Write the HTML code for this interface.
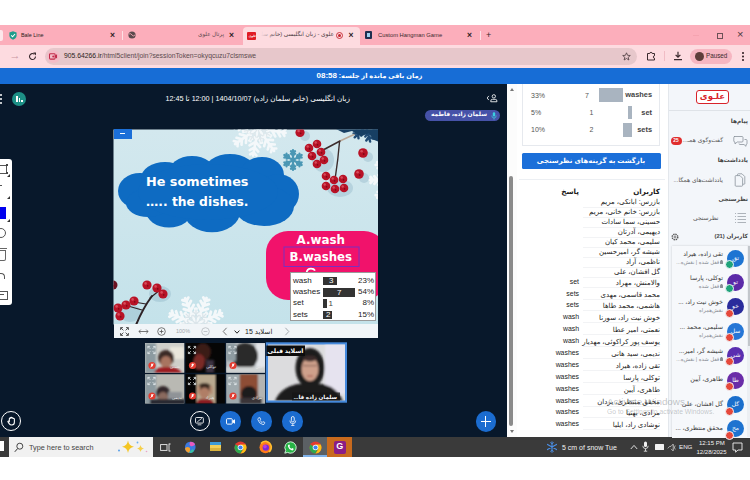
<!DOCTYPE html>
<html lang="fa">
<head>
<meta charset="utf-8">
<title>علوی - زبان انگلیسی</title>
<style>
html,body{margin:0;padding:0;}
body{width:750px;height:480px;overflow:hidden;background:#fff;position:relative;font-family:"Liberation Sans","DejaVu Sans",sans-serif;font-size:8px;color:#222;}
.a{position:absolute;}
.t{position:absolute;white-space:nowrap;line-height:1;}
.rtl{direction:rtl;}
svg{position:absolute;overflow:visible;}
/* chrome */
#tabbar{left:0;top:25px;width:750px;height:21px;background:#fcaebb;}
#toolbar{left:0;top:45px;width:750px;height:23px;background:#fddbe0;}
#acttab{left:243px;top:27px;width:117px;height:19px;background:#fddbe0;border-radius:4px 4px 0 0;}
#url{left:45px;top:48px;width:592px;height:16.5px;border-radius:8.5px;background:#e7c7cb;}
#bluebar{left:0;top:67.5px;width:750px;height:17px;background:#176dd6;}
#navy{left:0;top:84px;width:507px;height:353px;background:#08182b;}
#panel{left:507px;top:84px;width:161px;height:353px;background:#fff;}
#side{left:668px;top:84px;width:82px;height:353px;background:#f3f6fa;}
#taskbar{left:0;top:437px;width:750px;height:19.5px;background:#3a3a3a;}
/* poll table */
.row{position:absolute;right:90px;white-space:nowrap;direction:rtl;font-size:7px;line-height:1;color:#1a1a1a;}
.ans{position:absolute;right:171px;white-space:nowrap;font-size:6.9px;line-height:1;color:#1a1a1a;}
.un{position:absolute;right:27px;white-space:nowrap;direction:rtl;font-size:6.3px;line-height:1;color:#3a3a3a;}
.us{position:absolute;right:27px;white-space:nowrap;direction:rtl;font-size:5.3px;line-height:1;color:#8a8f96;}
.lk{display:inline-block;width:2.6px;height:2.4px;background:#8a8f96;margin-left:1px;border-radius:.5px;box-shadow:0 -1.6px 0 -0.6px #8a8f96;}
.av{position:absolute;left:727px;width:17px;height:17px;border-radius:50%;color:#fff;font-size:6px;line-height:17px;text-align:center;}
.bd{position:absolute;left:725px;width:7px;height:7px;border-radius:50%;background:#e5483b;border:1px solid #f3f6fa;}
</style>
</head>
<body>
<!-- browser chrome -->
<div class="a" id="tabbar"></div>
<div class="a" id="toolbar"></div>
<div class="a" id="acttab"></div>
<div class="a" id="url"></div>
<div class="a" id="bluebar"></div>
<div class="a" id="navy"></div>
<div class="a" id="panel"></div>
<div class="a" id="side"></div>
<div class="a" id="taskbar"></div>

<!-- tabs -->
<div class="a" style="left:0;top:30px;width:3px;height:11px;background:#fde6ea;border-radius:0 2px 2px 0;"></div>
<svg style="left:9px;top:31px" width="8" height="9" viewBox="0 0 8 9"><path d="M4 0.3 L7.6 1.5 V4.6 C7.6 6.8 5.8 8.2 4 8.8 C2.2 8.2 0.4 6.8 0.4 4.6 V1.5 Z" fill="#1f9d8b"/><path d="M2.2 4.4 L3.6 5.8 L6 3" stroke="#fff" stroke-width="1.1" fill="none"/></svg>
<div class="t" style="left:21px;top:32.5px;font-size:5.4px;color:#2a1c20;">Bale Line</div>
<div class="t" style="left:110px;top:31px;font-size:8.5px;font-weight:bold;color:#2e2024;">×</div>
<div class="a" style="left:122px;top:31px;width:1px;height:9px;background:#fde0e5;"></div>
<svg style="left:128px;top:31px" width="8" height="8" viewBox="0 0 8 8"><circle cx="4" cy="4" r="3.6" fill="#5a4a4e"/><path d="M1 3 Q3 2 4 4 T7 4" stroke="#fcaebb" stroke-width="0.8" fill="none"/></svg>
<div class="t rtl" style="right:526px;top:31.5px;font-size:5.6px;color:#5a474b;">پرتال علوی</div>
<div class="t" style="left:229px;top:31px;font-size:8.5px;font-weight:bold;color:#2e2024;">×</div>
<div class="a" style="left:247px;top:32px;width:9px;height:8px;background:#e01b24;border-radius:1px;"></div>
<div class="t" style="left:248.5px;top:34.5px;font-size:3px;color:#fff;font-weight:bold;">علوی</div>
<div class="a" style="left:261px;top:29px;width:73px;height:12px;overflow:hidden;"><div class="t rtl" style="right:0;top:2.5px;font-size:5.8px;color:#4a3a3e;">علوی - زبان انگلیسی (خانم سلمان زاده) 1404/10/07</div><div class="a" style="left:0;top:0;width:16px;height:12px;background:linear-gradient(to right,#fddbe0,rgba(253,219,224,0));"></div></div>
<svg style="left:336px;top:32px" width="7" height="7" viewBox="0 0 7 7"><circle cx="3.5" cy="3.5" r="3" fill="none" stroke="#c4232c" stroke-width="0.9"/><circle cx="3.5" cy="3.5" r="1.5" fill="#c4232c"/></svg>
<div class="t" style="left:348.5px;top:31px;font-size:8.5px;font-weight:bold;color:#2e2024;">×</div>
<div class="a" style="left:365px;top:31px;width:7px;height:8px;background:#1f2f4f;border-radius:1px;"></div>
<div class="a" style="left:367px;top:33px;width:3px;height:4px;background:#9fd0f0;"></div>
<div class="t" style="left:378px;top:32.5px;font-size:5.8px;color:#3b2a2e;">Custom Hangman Game</div>
<div class="t" style="left:467px;top:31px;font-size:8.5px;font-weight:bold;color:#2e2024;">×</div>
<div class="a" style="left:480px;top:31px;width:1px;height:9px;background:#fde0e5;"></div>
<div class="t" style="left:486px;top:30.5px;font-size:9px;color:#3b2a2e;">+</div>
<!-- window controls -->
<div class="a" style="left:693px;top:35px;width:6px;height:1px;background:#f5a3b0;"></div>
<div class="a" style="left:716.5px;top:32.5px;width:4px;height:4px;border:1px solid #6b5156;border-top-width:1.6px;"></div>
<div class="t" style="left:737px;top:29px;font-size:11px;color:#4a3a3e;">×</div>
<!-- toolbar -->
<div class="t" style="left:9.5px;top:50px;font-size:11px;color:#c8959f;">→</div>
<svg style="left:28px;top:52px" width="9" height="9" viewBox="0 0 9 9"><path d="M7.5 4.5 A3 3 0 1 1 6.4 2.2" stroke="#3b2a2e" stroke-width="1.1" fill="none"/><path d="M5.2 0.6 H8 V3.4 Z" fill="#3b2a2e"/></svg>
<div class="a" style="left:47px;top:50px;width:12.5px;height:12.5px;border-radius:50%;background:#f3bcc7;"></div>
<svg style="left:49px;top:53px" width="8.5" height="6.8" viewBox="0 0 10 8"><rect x="0.6" y="0.8" width="6.6" height="6.4" rx="1.2" fill="none" stroke="#c22b4a" stroke-width="1.2"/><path d="M7 3 L9.5 1.5 V6.5 L7 5 Z" fill="#c22b4a"/><circle cx="5" cy="4" r="1.2" fill="#c22b4a"/></svg>
<div class="t" style="left:64px;top:52.5px;font-size:6.8px;color:#5c4a4e;"><span style="color:#2a1d20">905.64266.ir</span>/html5client/join?sessionToken=okyqcuzu7clsmswe</div>
<svg style="left:622px;top:52px" width="9" height="9" viewBox="0 0 9 9"><path d="M4.5 0.8 L5.6 3.3 L8.3 3.5 L6.2 5.3 L6.9 8 L4.5 6.5 L2.1 8 L2.8 5.3 L0.7 3.5 L3.4 3.3 Z" fill="none" stroke="#4a3a3e" stroke-width="0.8"/></svg>
<svg style="left:646px;top:51px" width="10" height="10" viewBox="0 0 10 10"><path d="M1.5 2.5 H3.8 A1.2 1.2 0 1 1 6.2 2.5 H8.5 V4.8 A1.2 1.2 0 1 0 8.5 7.2 V9 H1.5 Z" fill="none" stroke="#3b2a2e" stroke-width="1"/></svg>
<div class="a" style="left:664px;top:51px;width:1px;height:10px;background:#f1bcc5;"></div>
<svg style="left:673px;top:51px" width="10" height="10" viewBox="0 0 10 10"><path d="M5 0.8 V6 M2.6 3.8 L5 6.2 L7.4 3.8 M1 8.6 H9" stroke="#3b2a2e" stroke-width="1.2" fill="none"/></svg>
<div class="a" style="left:690px;top:49px;width:42px;height:15px;border-radius:8px;background:#f6b6c1;"></div>
<div class="a" style="left:694.5px;top:52px;width:9px;height:9px;border-radius:50%;background:#5e3d3a;"></div>
<div class="t" style="left:706px;top:53px;font-size:6.3px;color:#3b2a2e;">Paused</div>
<div class="a" style="left:742px;top:52px;width:1.6px;height:1.6px;border-radius:50%;background:#3b2a2e;box-shadow:0 3.5px 0 #3b2a2e,0 7px 0 #3b2a2e;"></div>
<!-- blue bar -->
<div class="t rtl" style="left:316px;width:107px;text-align:center;top:72px;font-size:6.7px;font-weight:bold;color:#fff;">زمان باقی مانده از جلسه: <span style="font-size:8px">08:58</span></div>

<!-- navy area header -->
<div class="a" style="left:0;top:94px;width:2px;height:2px;border-radius:50%;background:#fff;box-shadow:0 4px 0 #fff,0 8px 0 #fff;"></div>
<div class="a" style="left:12px;top:92px;width:14px;height:14px;border-radius:50%;background:#1d8f86;"></div>
<div class="a" style="left:15.5px;top:96px;width:2px;height:6px;background:#fff;"></div>
<div class="a" style="left:18.5px;top:98px;width:1.5px;height:4px;background:#fff;"></div>
<div class="a" style="left:21px;top:100px;width:1.5px;height:2px;background:#fff;"></div>
<div class="t rtl" id="title" style="right:400px;top:94.5px;font-size:7.2px;color:#fff;">زبان انگلیسی (خانم سلمان زاده) 1404/10/07 | 12:00 تا 12:45</div>
<svg style="left:484.5px;top:93px" width="13.5" height="10" viewBox="0 0 16 12"><path d="M4.5 3.5 L2.5 6 L4.5 8.5" stroke="#fff" stroke-width="1" fill="none"/><circle cx="10.5" cy="4" r="2" fill="none" stroke="#fff" stroke-width="1"/><path d="M6.8 10.5 V9.6 Q6.8 7.6 8.8 7.6 H12.2 Q14.2 7.6 14.2 9.6 V10.5 Z" fill="none" stroke="#fff" stroke-width="1"/></svg>
<div class="a" style="left:425px;top:110px;width:75px;height:11px;border-radius:6px;background:#4652a8;"></div>
<div class="t rtl" style="right:263px;top:112.3px;font-size:5.9px;font-weight:bold;color:#fff;">سلمان زاده، فاطمه</div>
<svg style="left:491px;top:112px" width="6" height="8" viewBox="0 0 6 8"><rect x="1.8" y="0.3" width="2.4" height="4.2" rx="1.2" fill="#39d0e0"/><path d="M0.8 3.6 Q0.8 6 3 6 Q5.2 6 5.2 3.6 M3 6 V7.6" stroke="#39d0e0" stroke-width="0.7" fill="none"/></svg>
<!-- whiteboard toolbox -->
<div class="a" style="left:0;top:159px;width:11.5px;height:146px;background:#fff;border-radius:0 3px 3px 0;"></div>
<div class="a" style="left:0;top:165px;width:6px;height:7px;border:1px solid #555;border-left:none;"></div>
<div class="a" style="left:6px;top:164px;width:2px;height:2px;background:#444;"></div>
<div class="a" style="left:6px;top:172px;width:2px;height:2px;background:#444;"></div>
<div class="a" style="left:7px;top:174px;width:0;height:0;border-left:3px solid transparent;border-bottom:3px solid #333;"></div>
<div class="a" style="left:7px;top:196px;width:0;height:0;border-left:3px solid transparent;border-bottom:3px solid #333;"></div>
<div class="a" style="left:0;top:185px;width:2px;height:1px;background:#555;"></div>
<div class="a" style="left:0;top:207px;width:6px;height:12px;background:#0000ee;"></div>
<div class="a" style="left:7px;top:219px;width:0;height:0;border-left:3px solid transparent;border-bottom:3px solid #333;"></div>
<div class="a" style="left:-4px;top:228px;width:8px;height:8px;border:1px solid #555;border-radius:50%;"></div>
<div class="a" style="left:0;top:250px;width:5px;height:9px;border:1px solid #666;border-left:none;border-radius:0 0 2px 0;"></div>
<div class="a" style="left:0;top:247.5px;width:7px;height:1.5px;background:#666;"></div>
<div class="a" style="left:-3px;top:273px;width:7px;height:5px;border-top:1px solid #555;border-right:1px solid #555;border-radius:0 4px 0 0;"></div>
<div class="a" style="left:0;top:291px;width:7px;height:7px;border:1px solid #555;border-left:none;"></div>
<div class="a" style="left:0;top:294px;width:4px;height:1px;background:#555;"></div>
<!-- bottom action buttons -->
<div class="a" style="left:0.7px;top:411.3px;width:18.2px;height:18.2px;border-radius:50%;border:1.2px solid #fff;"></div>
<svg style="left:6.6px;top:416px" width="9" height="10" viewBox="0 0 10 11"><path d="M2.6 6 V3 a0.7 0.7 0 0 1 1.4 0 V2.2 a0.7 0.7 0 0 1 1.4 0 V2.6 a0.7 0.7 0 0 1 1.4 0 V3.4 a0.7 0.7 0 0 1 1.4 0 V7 Q8.2 10 5.4 10 Q3.4 10 2.4 8.4 L1 6.2 Q1.6 5.2 2.6 6 Z" fill="none" stroke="#fff" stroke-width="1.2"/></svg>
<div class="a" style="left:189.5px;top:411px;width:18px;height:18px;border-radius:50%;border:1.2px solid #fff;"></div>
<svg style="left:194.6px;top:416.8px" width="9.6" height="8.7" viewBox="0 0 11 10"><rect x="0.6" y="0.6" width="9" height="6.4" rx="1" fill="none" stroke="#fff" stroke-width="1"/><path d="M3 9 H7.4 M2.6 5.6 L7.8 1.6" stroke="#fff" stroke-width="0.9"/></svg>
<div class="a" style="left:220px;top:411px;width:20.5px;height:20.5px;border-radius:50%;background:#1b6cd0;"></div>
<svg style="left:225.6px;top:417.6px" width="9.6" height="7" viewBox="0 0 11 8"><rect x="0.6" y="0.8" width="6.6" height="6.2" rx="1" fill="none" stroke="#fff" stroke-width="1.1"/><path d="M7.4 3 L10.3 1.3 V6.5 L7.4 4.8 Z" fill="#fff"/></svg>
<div class="a" style="left:251px;top:411px;width:20.5px;height:20.5px;border-radius:50%;background:#1b6cd0;"></div>
<svg style="left:257.2px;top:417px" width="8.4" height="8.4" viewBox="0 0 10 10"><path d="M2.2 1 L3.6 0.8 L4.4 3 L3.4 3.8 Q4.4 5.8 6.2 6.6 L7 5.6 L9.2 6.4 L9 7.8 Q8.6 9.2 7 9 Q2.4 8 1 3 Q0.8 1.4 2.2 1 Z" fill="none" stroke="#fff" stroke-width="0.9"/></svg>
<div class="a" style="left:282px;top:411px;width:20.5px;height:20.5px;border-radius:50%;background:#1b6cd0;"></div>
<svg style="left:288.6px;top:416.3px" width="7.6" height="10.2" viewBox="0 0 9 12"><rect x="2.8" y="0.6" width="3.4" height="6.4" rx="1.7" fill="none" stroke="#fff" stroke-width="1"/><path d="M1 5.4 Q1 9 4.5 9 Q8 9 8 5.4 M4.5 9 V11.2 M2.6 11.2 H6.4" stroke="#fff" stroke-width="0.9" fill="none"/></svg>
<div class="a" style="left:475.5px;top:411px;width:20.5px;height:20.5px;border-radius:50%;background:#1b6cd0;"></div>
<div class="a" style="left:480.5px;top:420.7px;width:10.5px;height:1.2px;background:#fff;"></div>
<div class="a" style="left:485.2px;top:416px;width:1.2px;height:10.5px;background:#fff;"></div>

<!-- slide -->
<svg style="left:0;top:0" width="750" height="480" viewBox="0 0 750 480">
<defs><clipPath id="sc"><rect x="113.5" y="129.4" width="264.5" height="195"/></clipPath><linearGradient id="sbg" x1="0" y1="0" x2="0" y2="1"><stop offset="0" stop-color="#d3e8ee"/><stop offset="1" stop-color="#c4e2ea"/></linearGradient><filter id="bl"><feGaussianBlur stdDeviation="0.5"/></filter></defs>
<g clip-path="url(#sc)">
<rect x="113" y="129" width="266" height="196" fill="url(#sbg)"/>
<g opacity="0.22" fill="#5f8fa8" filter="url(#bl)"><ellipse cx="323" cy="160" rx="11" ry="12"/><ellipse cx="340" cy="188" rx="13" ry="9"/><ellipse cx="364" cy="178" rx="5" ry="5"/><ellipse cx="368" cy="157" rx="5" ry="5"/><ellipse cx="305" cy="136" rx="5" ry="5"/><ellipse cx="160" cy="294" rx="11" ry="8"/><ellipse cx="130" cy="313" rx="11" ry="9"/></g>
<path d="M258.0 128.0L285.6 132.9M266.3 129.5L272.7 124.1M266.3 129.5L270.5 136.7M271.8 130.4L277.1 125.9M271.8 130.4L275.3 136.5M277.3 131.4L281.6 127.8M277.3 131.4L280.1 136.3M282.3 132.3L285.5 129.6M282.3 132.3L284.4 135.9M258.0 128.0L274.1 150.9M262.8 134.9L271.2 135.6M262.8 134.9L260.6 143.0M266.0 139.5L273.0 140.1M266.0 139.5L264.2 146.2M269.2 144.1L274.8 144.5M269.2 144.1L267.8 149.5M272.1 148.2L276.3 148.5M272.1 148.2L271.0 152.2M258.0 128.0L253.1 155.6M256.5 136.3L261.9 142.7M256.5 136.3L249.3 140.5M255.6 141.8L260.1 147.1M255.6 141.8L249.5 145.3M254.6 147.3L258.2 151.6M254.6 147.3L249.7 150.1M253.7 152.3L256.4 155.5M253.7 152.3L250.1 154.4M258.0 128.0L235.1 144.1M251.1 132.8L250.4 141.2M251.1 132.8L243.0 130.6M246.5 136.0L245.9 143.0M246.5 136.0L239.8 134.2M241.9 139.2L241.5 144.8M241.9 139.2L236.5 137.8M237.8 142.1L237.5 146.3M237.8 142.1L233.8 141.0M258.0 128.0L230.4 123.1M249.7 126.5L243.3 131.9M249.7 126.5L245.5 119.3M244.2 125.6L238.9 130.1M244.2 125.6L240.7 119.5M238.7 124.6L234.4 128.2M238.7 124.6L235.9 119.7M233.7 123.7L230.5 126.4M233.7 123.7L231.6 120.1M258.0 128.0L241.9 105.1M253.2 121.1L244.8 120.4M253.2 121.1L255.4 113.0M250.0 116.5L243.0 115.9M250.0 116.5L251.8 109.8M246.8 111.9L241.2 111.5M246.8 111.9L248.2 106.5M243.9 107.8L239.7 107.5M243.9 107.8L245.0 103.8M258.0 128.0L262.9 100.4M259.5 119.7L254.1 113.3M259.5 119.7L266.7 115.5M260.4 114.2L255.9 108.9M260.4 114.2L266.5 110.7M261.4 108.7L257.8 104.4M261.4 108.7L266.3 105.9M262.3 103.7L259.6 100.5M262.3 103.7L265.9 101.6M258.0 128.0L280.9 111.9M264.9 123.2L265.6 114.8M264.9 123.2L273.0 125.4M269.5 120.0L270.1 113.0M269.5 120.0L276.2 121.8M274.1 116.8L274.5 111.2M274.1 116.8L279.5 118.2M278.2 113.9L278.5 109.7M278.2 113.9L282.2 115.0" stroke="#f4f8fa" stroke-width="2.6" stroke-linecap="round" fill="none"/><path d="M258.0 128.0L269.9 135.4M263.3 131.3L267.1 130.1M263.3 131.3L263.9 135.2M266.3 133.2L270.0 132.0M266.3 133.2L266.9 137.1M258.0 128.0L261.1 141.6M259.4 134.1L262.9 135.9M259.4 134.1L257.1 137.3M260.2 137.5L263.7 139.3M260.2 137.5L257.8 140.7M258.0 128.0L250.6 139.9M254.7 133.3L255.9 137.1M254.7 133.3L250.8 133.9M252.8 136.3L254.0 140.0M252.8 136.3L248.9 136.9M258.0 128.0L244.4 131.1M251.9 129.4L250.1 132.9M251.9 129.4L248.7 127.1M248.5 130.2L246.7 133.7M248.5 130.2L245.3 127.8M258.0 128.0L246.1 120.6M252.7 124.7L248.9 125.9M252.7 124.7L252.1 120.8M249.7 122.8L246.0 124.0M249.7 122.8L249.1 118.9M258.0 128.0L254.9 114.4M256.6 121.9L253.1 120.1M256.6 121.9L258.9 118.7M255.8 118.5L252.3 116.7M255.8 118.5L258.2 115.3M258.0 128.0L265.4 116.1M261.3 122.7L260.1 118.9M261.3 122.7L265.2 122.1M263.2 119.7L262.0 116.0M263.2 119.7L267.1 119.1M258.0 128.0L271.6 124.9M264.1 126.6L265.9 123.1M264.1 126.6L267.3 128.9M267.5 125.8L269.3 122.3M267.5 125.8L270.7 128.2" stroke="#dfe8ec" stroke-width="1.2" stroke-linecap="round" fill="none"/><path d="M293.0 160.0L301.7 165.0M296.9 162.2L299.5 161.3M296.9 162.2L297.4 165.0M299.1 163.5L301.7 162.5M299.1 163.5L299.5 166.3M293.0 160.0L293.0 170.0M293.0 164.5L295.1 166.3M293.0 164.5L290.9 166.3M293.0 167.0L295.1 168.8M293.0 167.0L290.9 168.8M293.0 160.0L284.3 165.0M289.1 162.2L288.6 165.0M289.1 162.2L286.5 161.3M286.9 163.5L286.5 166.3M286.9 163.5L284.3 162.5M293.0 160.0L284.3 155.0M289.1 157.8L286.5 158.7M289.1 157.8L288.6 155.0M286.9 156.5L284.3 157.5M286.9 156.5L286.5 153.7M293.0 160.0L293.0 150.0M293.0 155.5L290.9 153.7M293.0 155.5L295.1 153.7M293.0 153.0L290.9 151.2M293.0 153.0L295.1 151.2M293.0 160.0L301.7 155.0M296.9 157.8L297.4 155.0M296.9 157.8L299.5 158.7M299.1 156.5L299.5 153.7M299.1 156.5L301.7 157.5" stroke="#4a97b4" stroke-width="2.2" stroke-linecap="round" fill="none"/><path d="M366.0 126.0L381.5 130.1M373.0 127.9L376.6 125.3M373.0 127.9L374.8 131.9M376.8 128.9L380.5 126.3M376.8 128.9L378.7 133.0M366.0 126.0L370.1 141.5M367.9 133.0L371.9 134.8M367.9 133.0L365.3 136.6M368.9 136.8L373.0 138.7M368.9 136.8L366.3 140.5M366.0 126.0L354.7 137.3M360.9 131.1L361.3 135.6M360.9 131.1L356.4 130.7M358.1 133.9L358.5 138.4M358.1 133.9L353.6 133.5M366.0 126.0L350.5 121.9M359.0 124.1L355.4 126.7M359.0 124.1L357.2 120.1M355.2 123.1L351.5 125.7M355.2 123.1L353.3 119.0M366.0 126.0L361.9 110.5M364.1 119.0L360.1 117.2M364.1 119.0L366.7 115.4M363.1 115.2L359.0 113.3M363.1 115.2L365.7 111.5M366.0 126.0L377.3 114.7M371.1 120.9L370.7 116.4M371.1 120.9L375.6 121.3M373.9 118.1L373.5 113.6M373.9 118.1L378.4 118.5" stroke="#1f4a73" stroke-width="2.4" stroke-linecap="round" fill="none"/><path d="M395.0 180.0L420.0 180.0M402.5 180.0L407.3 174.3M402.5 180.0L407.3 185.7M407.5 180.0L411.5 175.2M407.5 180.0L411.5 184.8M412.5 180.0L415.7 176.2M412.5 180.0L415.7 183.8M417.0 180.0L419.4 177.1M417.0 180.0L419.4 182.9M395.0 180.0L412.7 197.7M400.3 185.3L407.8 184.6M400.3 185.3L399.6 192.8M403.8 188.8L410.1 188.3M403.8 188.8L403.3 195.1M407.4 192.4L412.4 191.9M407.4 192.4L406.9 197.4M410.6 195.6L414.3 195.2M410.6 195.6L410.2 199.3M395.0 180.0L395.0 205.0M395.0 187.5L400.7 192.3M395.0 187.5L389.3 192.3M395.0 192.5L399.8 196.5M395.0 192.5L390.2 196.5M395.0 197.5L398.8 200.7M395.0 197.5L391.2 200.7M395.0 202.0L397.9 204.4M395.0 202.0L392.1 204.4M395.0 180.0L377.3 197.7M389.7 185.3L390.4 192.8M389.7 185.3L382.2 184.6M386.2 188.8L386.7 195.1M386.2 188.8L379.9 188.3M382.6 192.4L383.1 197.4M382.6 192.4L377.6 191.9M379.4 195.6L379.8 199.3M379.4 195.6L375.7 195.2M395.0 180.0L370.0 180.0M387.5 180.0L382.7 185.7M387.5 180.0L382.7 174.3M382.5 180.0L378.5 184.8M382.5 180.0L378.5 175.2M377.5 180.0L374.3 183.8M377.5 180.0L374.3 176.2M373.0 180.0L370.6 182.9M373.0 180.0L370.6 177.1M395.0 180.0L377.3 162.3M389.7 174.7L382.2 175.4M389.7 174.7L390.4 167.2M386.2 171.2L379.9 171.7M386.2 171.2L386.7 164.9M382.6 167.6L377.6 168.1M382.6 167.6L383.1 162.6M379.4 164.4L375.7 164.8M379.4 164.4L379.8 160.7M395.0 180.0L395.0 155.0M395.0 172.5L389.3 167.7M395.0 172.5L400.7 167.7M395.0 167.5L390.2 163.5M395.0 167.5L399.8 163.5M395.0 162.5L391.2 159.3M395.0 162.5L398.8 159.3M395.0 158.0L392.1 155.6M395.0 158.0L397.9 155.6M395.0 180.0L412.7 162.3M400.3 174.7L399.6 167.2M400.3 174.7L407.8 175.4M403.8 171.2L403.3 164.9M403.8 171.2L410.1 171.7M407.4 167.6L406.9 162.6M407.4 167.6L412.4 168.1M410.6 164.4L410.2 160.7M410.6 164.4L414.3 164.8" stroke="#f4f8fa" stroke-width="2.8" stroke-linecap="round" fill="none"/><path d="M196.0 324.0L222.0 334.5M203.8 327.1L211.2 323.2M203.8 327.1L206.4 335.1M209.0 329.2L215.2 326.0M209.0 329.2L211.1 335.9M214.2 331.3L219.1 328.7M214.2 331.3L215.9 336.7M218.8 333.2L222.6 331.3M218.8 333.2L220.1 337.2M196.0 324.0L206.9 349.8M199.3 331.7L207.3 334.2M199.3 331.7L195.5 339.2M201.5 336.9L208.2 338.9M201.5 336.9L198.3 343.1M203.7 342.0L209.0 343.7M203.7 342.0L201.1 347.0M205.6 346.7L209.6 347.9M205.6 346.7L203.7 350.4M196.0 324.0L185.5 350.0M192.9 331.8L196.8 339.2M192.9 331.8L184.9 334.4M190.8 337.0L194.0 343.2M190.8 337.0L184.1 339.1M188.7 342.2L191.3 347.1M188.7 342.2L183.3 343.9M186.8 346.8L188.7 350.6M186.8 346.8L182.8 348.1M196.0 324.0L170.2 334.9M188.3 327.3L185.8 335.3M188.3 327.3L180.8 323.5M183.1 329.5L181.1 336.2M183.1 329.5L176.9 326.3M178.0 331.7L176.3 337.0M178.0 331.7L173.0 329.1M173.3 333.6L172.1 337.6M173.3 333.6L169.6 331.7M196.0 324.0L170.0 313.5M188.2 320.9L180.8 324.8M188.2 320.9L185.6 312.9M183.0 318.8L176.8 322.0M183.0 318.8L180.9 312.1M177.8 316.7L172.9 319.3M177.8 316.7L176.1 311.3M173.2 314.8L169.4 316.7M173.2 314.8L171.9 310.8M196.0 324.0L185.1 298.2M192.7 316.3L184.7 313.8M192.7 316.3L196.5 308.8M190.5 311.1L183.8 309.1M190.5 311.1L193.7 304.9M188.3 306.0L183.0 304.3M188.3 306.0L190.9 301.0M186.4 301.3L182.4 300.1M186.4 301.3L188.3 297.6M196.0 324.0L206.5 298.0M199.1 316.2L195.2 308.8M199.1 316.2L207.1 313.6M201.2 311.0L198.0 304.8M201.2 311.0L207.9 308.9M203.3 305.8L200.7 300.9M203.3 305.8L208.7 304.1M205.2 301.2L203.3 297.4M205.2 301.2L209.2 299.9M196.0 324.0L221.8 313.1M203.7 320.7L206.2 312.7M203.7 320.7L211.2 324.5M208.9 318.5L210.9 311.8M208.9 318.5L215.1 321.7M214.0 316.3L215.7 311.0M214.0 316.3L219.0 318.9M218.7 314.4L219.9 310.4M218.7 314.4L222.4 316.3" stroke="#f4f8fa" stroke-width="2.8" stroke-linecap="round" fill="none"/><path d="M196.0 324.0L210.0 324.0M202.3 324.0L204.8 321.0M202.3 324.0L204.8 327.0M205.8 324.0L208.3 321.0M205.8 324.0L208.3 327.0M196.0 324.0L205.9 333.9M200.5 328.5L204.4 328.1M200.5 328.5L200.1 332.4M202.9 330.9L206.8 330.6M202.9 330.9L202.6 334.8M196.0 324.0L196.0 338.0M196.0 330.3L199.0 332.8M196.0 330.3L193.0 332.8M196.0 333.8L199.0 336.3M196.0 333.8L193.0 336.3M196.0 324.0L186.1 333.9M191.5 328.5L191.9 332.4M191.5 328.5L187.6 328.1M189.1 330.9L189.4 334.8M189.1 330.9L185.2 330.6M196.0 324.0L182.0 324.0M189.7 324.0L187.2 327.0M189.7 324.0L187.2 321.0M186.2 324.0L183.7 327.0M186.2 324.0L183.7 321.0M196.0 324.0L186.1 314.1M191.5 319.5L187.6 319.9M191.5 319.5L191.9 315.6M189.1 317.1L185.2 317.4M189.1 317.1L189.4 313.2M196.0 324.0L196.0 310.0M196.0 317.7L193.0 315.2M196.0 317.7L199.0 315.2M196.0 314.2L193.0 311.7M196.0 314.2L199.0 311.7M196.0 324.0L205.9 314.1M200.5 319.5L200.1 315.6M200.5 319.5L204.4 319.9M202.9 317.1L202.6 313.2M202.9 317.1L206.8 317.4" stroke="#dbe5ea" stroke-width="1.2" stroke-linecap="round" fill="none"/>
<g fill="#0e6bc2"><ellipse cx="140" cy="191" rx="22" ry="18"/><ellipse cx="165" cy="178" rx="24" ry="16"/><ellipse cx="192" cy="174" rx="24" ry="18"/><ellipse cx="230" cy="172" rx="26" ry="18"/><ellipse cx="262" cy="175" rx="22" ry="18"/><ellipse cx="278" cy="194" rx="21" ry="20"/><ellipse cx="264" cy="206" rx="30" ry="20"/><ellipse cx="212" cy="212" rx="28" ry="20.3"/><ellipse cx="169" cy="211" rx="23" ry="16.5"/><ellipse cx="148" cy="203" rx="22" ry="14"/><ellipse cx="208" cy="192" rx="70" ry="28"/></g>
<g fill="none" stroke-linecap="round"><path d="M354 134.5 L340 141" stroke="#b9a898" stroke-width="1.4"/><path d="M340 141 L324 149.5" stroke="#3c2c2c" stroke-width="1.5"/><path d="M339.5 142 Q338 160 335.5 176" stroke="#3c2c2c" stroke-width="1.4"/><path d="M152 296 Q143 308 136 325" stroke="#2e2226" stroke-width="2"/><path d="M150 298 L160 290 M146 304 L134 302 M142 310 L128 306" stroke="#2e2226" stroke-width="1.2"/></g><path d="M336 129 H379 V142 L373 139.5 L369 133 L361 136.5 L352 131 L344 133 Z" fill="#173f63"/>
<circle cx="309" cy="148" r="4.3" fill="#b81226"/><circle cx="307.7" cy="146.5" r="1.2" fill="#e8727e" opacity="0.6"/><circle cx="309.6" cy="148.9" r="0.8" fill="#7d0a18"/>
<circle cx="317" cy="144" r="4.3" fill="#b81226"/><circle cx="315.7" cy="142.5" r="1.2" fill="#e8727e" opacity="0.6"/><circle cx="317.6" cy="144.9" r="0.8" fill="#7d0a18"/>
<circle cx="321" cy="152" r="4.3" fill="#b81226"/><circle cx="319.7" cy="150.5" r="1.2" fill="#e8727e" opacity="0.6"/><circle cx="321.6" cy="152.9" r="0.8" fill="#7d0a18"/>
<circle cx="312" cy="156" r="4.3" fill="#b81226"/><circle cx="310.7" cy="154.5" r="1.2" fill="#e8727e" opacity="0.6"/><circle cx="312.6" cy="156.9" r="0.8" fill="#7d0a18"/>
<circle cx="324" cy="160" r="4.3" fill="#b81226"/><circle cx="322.7" cy="158.5" r="1.2" fill="#e8727e" opacity="0.6"/><circle cx="324.6" cy="160.9" r="0.8" fill="#7d0a18"/>
<circle cx="317" cy="164" r="4.3" fill="#b81226"/><circle cx="315.7" cy="162.5" r="1.2" fill="#e8727e" opacity="0.6"/><circle cx="317.6" cy="164.9" r="0.8" fill="#7d0a18"/>
<circle cx="326" cy="176" r="4.3" fill="#b81226"/><circle cx="324.7" cy="174.5" r="1.2" fill="#e8727e" opacity="0.6"/><circle cx="326.6" cy="176.9" r="0.8" fill="#7d0a18"/>
<circle cx="334" cy="180" r="4.3" fill="#b81226"/><circle cx="332.7" cy="178.5" r="1.2" fill="#e8727e" opacity="0.6"/><circle cx="334.6" cy="180.9" r="0.8" fill="#7d0a18"/>
<circle cx="343" cy="179" r="4.3" fill="#b81226"/><circle cx="341.7" cy="177.5" r="1.2" fill="#e8727e" opacity="0.6"/><circle cx="343.6" cy="179.9" r="0.8" fill="#7d0a18"/>
<circle cx="326" cy="186" r="4.3" fill="#b81226"/><circle cx="324.7" cy="184.5" r="1.2" fill="#e8727e" opacity="0.6"/><circle cx="326.6" cy="186.9" r="0.8" fill="#7d0a18"/>
<circle cx="335" cy="189" r="4.3" fill="#b81226"/><circle cx="333.7" cy="187.5" r="1.2" fill="#e8727e" opacity="0.6"/><circle cx="335.6" cy="189.9" r="0.8" fill="#7d0a18"/>
<circle cx="344" cy="188" r="4.3" fill="#b81226"/><circle cx="342.7" cy="186.5" r="1.2" fill="#e8727e" opacity="0.6"/><circle cx="344.6" cy="188.9" r="0.8" fill="#7d0a18"/>
<circle cx="300" cy="132.5" r="4.6" fill="#b81226"/><circle cx="298.6" cy="130.9" r="1.3" fill="#e8727e" opacity="0.6"/><circle cx="300.7" cy="133.4" r="0.8" fill="#7d0a18"/>
<circle cx="363" cy="153" r="4.8" fill="#b81226"/><circle cx="361.6" cy="151.3" r="1.3" fill="#e8727e" opacity="0.6"/><circle cx="363.7" cy="154.0" r="0.9" fill="#7d0a18"/>
<circle cx="359" cy="174" r="4.8" fill="#b81226"/><circle cx="357.6" cy="172.3" r="1.3" fill="#e8727e" opacity="0.6"/><circle cx="359.7" cy="175.0" r="0.9" fill="#7d0a18"/>
<circle cx="147" cy="285" r="4.6" fill="#b81226"/><circle cx="145.6" cy="283.4" r="1.3" fill="#e8727e" opacity="0.6"/><circle cx="147.7" cy="285.9" r="0.8" fill="#7d0a18"/>
<circle cx="157" cy="288" r="4.6" fill="#b81226"/><circle cx="155.6" cy="286.4" r="1.3" fill="#e8727e" opacity="0.6"/><circle cx="157.7" cy="288.9" r="0.8" fill="#7d0a18"/>
<circle cx="163" cy="294" r="4.6" fill="#b81226"/><circle cx="161.6" cy="292.4" r="1.3" fill="#e8727e" opacity="0.6"/><circle cx="163.7" cy="294.9" r="0.8" fill="#7d0a18"/>
<circle cx="134" cy="301" r="4.6" fill="#b81226"/><circle cx="132.6" cy="299.4" r="1.3" fill="#e8727e" opacity="0.6"/><circle cx="134.7" cy="301.9" r="0.8" fill="#7d0a18"/>
<circle cx="126" cy="305" r="4.6" fill="#b81226"/><circle cx="124.6" cy="303.4" r="1.3" fill="#e8727e" opacity="0.6"/><circle cx="126.7" cy="305.9" r="0.8" fill="#7d0a18"/>
<circle cx="118" cy="308" r="4.6" fill="#b81226"/><circle cx="116.6" cy="306.4" r="1.3" fill="#e8727e" opacity="0.6"/><circle cx="118.7" cy="308.9" r="0.8" fill="#7d0a18"/>
<circle cx="120" cy="316" r="4.6" fill="#b81226"/><circle cx="118.6" cy="314.4" r="1.3" fill="#e8727e" opacity="0.6"/><circle cx="120.7" cy="316.9" r="0.8" fill="#7d0a18"/>
<circle cx="113" cy="285" r="4.5" fill="#6a1020"/><circle cx="111.7" cy="283.4" r="1.3" fill="#e8727e" opacity="0.6"/><circle cx="113.7" cy="285.9" r="0.8" fill="#7d0a18"/>
<rect x="266" y="231" width="120" height="69" rx="22" fill="#f1126b"/>
<rect x="284" y="247" width="75" height="19.5" fill="none" stroke="#7b2fc0" stroke-width="1"/><path d="M306.5 273 Q307 268.6 311 268.6 Q314 268.6 315 270.6" stroke="#fff" stroke-width="1.8" fill="none"/>
</g>
<g font-family="'DejaVu Sans','Liberation Sans',sans-serif" font-weight="bold" fill="#fff">
<text id="s1" x="146" y="185.5" font-size="13" textLength="102.5" lengthAdjust="spacingAndGlyphs">He sometimes</text>
<text id="s2" x="146" y="205.5" font-size="13" textLength="102.5" lengthAdjust="spacingAndGlyphs">….. the dishes.</text>
<text id="s3" x="296.5" y="244.2" font-size="12.2" textLength="48.5" lengthAdjust="spacingAndGlyphs">A.wash</text>
<text id="s4" x="289.5" y="261.3" font-size="12.2" textLength="62.5" lengthAdjust="spacingAndGlyphs">B.washes</text>
</g>
</svg>
<div class="a" style="left:113.5px;top:129.4px;width:18px;height:9.2px;background:#1c6fd8;"></div>
<div class="a" style="left:119.5px;top:133px;width:5px;height:1px;background:#fff;"></div>
<!-- poll overlay on slide -->
<div class="a" style="left:289.5px;top:271.5px;width:86.3px;height:49.6px;background:#fff;border:1px solid #9a9a9a;box-sizing:border-box;"></div>
<div class="t" style="left:293px;top:276.6px;font-size:8px;color:#222;">wash</div>
<div class="t" style="left:293px;top:288.1px;font-size:8px;color:#222;">washes</div>
<div class="t" style="left:293px;top:299.1px;font-size:8px;color:#222;">set</div>
<div class="t" style="left:293px;top:310.6px;font-size:8px;color:#222;">sets</div>
<div class="a" style="left:322.5px;top:276.6px;width:14px;height:8.5px;background:#333;"></div>
<div class="a" style="left:322.5px;top:288.1px;width:32.5px;height:8.5px;background:#333;"></div>
<div class="a" style="left:322.5px;top:299.1px;width:4px;height:8.5px;background:#333;"></div>
<div class="a" style="left:322.5px;top:310.6px;width:9.5px;height:8.5px;background:#333;"></div>
<div class="t" style="left:329px;top:277.1px;font-size:8px;color:#fff;">3</div>
<div class="t" style="left:337px;top:288.6px;font-size:8px;color:#fff;">7</div>
<div class="t" style="left:328.5px;top:299.6px;font-size:8px;color:#444;">1</div>
<div class="t" style="left:326px;top:311.1px;font-size:8px;color:#fff;">2</div>
<div class="t" style="right:376px;top:276.6px;font-size:8px;color:#222;">23%</div>
<div class="t" style="right:376px;top:288.1px;font-size:8px;color:#222;">54%</div>
<div class="t" style="right:376px;top:299.1px;font-size:8px;color:#222;">8%</div>
<div class="t" style="right:376px;top:310.6px;font-size:8px;color:#222;">15%</div>
<!-- slide toolbar -->
<div class="a" style="left:113.5px;top:324.4px;width:264.5px;height:13.7px;background:#f1f5f8;"></div>
<svg style="left:120px;top:327.3px" width="9" height="9" viewBox="0 0 9 9"><path d="M0.6 3 V0.6 H3 M6 0.6 H8.4 V3 M8.4 6 V8.4 H6 M3 8.4 H0.6 V6 M0.8 0.8 L3.4 3.4 M8.2 0.8 L5.6 3.4 M8.2 8.2 L5.6 5.6 M0.8 8.2 L3.4 5.6" stroke="#444" stroke-width="0.9" fill="none"/></svg>
<svg style="left:138px;top:328.3px" width="11" height="7" viewBox="0 0 11 7"><path d="M1 3.5 H10 M2.8 1.6 L0.9 3.5 L2.8 5.4 M8.2 1.6 L10.1 3.5 L8.2 5.4" stroke="#555" stroke-width="0.8" fill="none"/></svg>
<svg style="left:156.5px;top:327.3px" width="9" height="9" viewBox="0 0 9 9"><circle cx="4.5" cy="4.5" r="3.8" fill="none" stroke="#555" stroke-width="0.8"/><path d="M2.6 4.5 H6.4 M4.5 2.6 V6.4" stroke="#555" stroke-width="0.8"/></svg>
<div class="t" style="left:176px;top:328.8px;font-size:5.5px;color:#a0a6ab;">100%</div>
<svg style="left:200.5px;top:327.3px" width="9" height="9" viewBox="0 0 9 9"><circle cx="4.5" cy="4.5" r="3.8" fill="none" stroke="#b5babf" stroke-width="0.8"/><path d="M2.6 4.5 H6.4" stroke="#b5babf" stroke-width="0.8"/></svg>
<svg style="left:222px;top:327.3px" width="6" height="9" viewBox="0 0 6 9"><path d="M4.6 0.8 L1.2 4.5 L4.6 8.2" stroke="#666" stroke-width="0.9" fill="none"/></svg>
<svg style="left:234px;top:330.3px" width="6" height="4" viewBox="0 0 6 4"><path d="M0.6 0.6 L3 3.2 L5.4 0.6" stroke="#222" stroke-width="1" fill="none"/></svg>
<div class="t rtl" style="left:245px;top:327.8px;font-size:7px;color:#222;">اسلاید 15</div>
<svg style="left:284px;top:327.3px" width="6" height="9" viewBox="0 0 6 9"><path d="M1.4 0.8 L4.8 4.5 L1.4 8.2" stroke="#9aa0a6" stroke-width="0.9" fill="none"/></svg>

<!-- video thumbnails -->
<svg style="left:0;top:0" width="750" height="480" viewBox="0 0 750 480">
<defs><filter id="vb" x="-5%" y="-5%" width="110%" height="110%"><feGaussianBlur stdDeviation="0.9"/></filter>
<clipPath id="c11"><rect x="145" y="343" width="39.3" height="29.7"/></clipPath>
<clipPath id="c12"><rect x="185.6" y="343" width="39.3" height="29.7"/></clipPath>
<clipPath id="c13"><rect x="226.2" y="343" width="38.8" height="29.7"/></clipPath>
<clipPath id="c21"><rect x="145" y="374.2" width="39.3" height="29.3"/></clipPath>
<clipPath id="c22"><rect x="185.6" y="374.2" width="39.3" height="29.3"/></clipPath>
<clipPath id="c23"><rect x="226.2" y="374.2" width="38.8" height="29.3"/></clipPath>
<clipPath id="cbig"><rect x="268" y="344.5" width="77" height="56"/></clipPath></defs>
<g clip-path="url(#c11)"><rect x="145" y="343" width="40" height="30" fill="#cfcfca"/><g filter="url(#vb)"><rect x="170" y="347" width="14" height="12" fill="#e9e6dc"/><rect x="145" y="343" width="11" height="30" fill="#8c9aa0"/><ellipse cx="166" cy="358" rx="8" ry="8" fill="#3b2a25"/><ellipse cx="166" cy="362" rx="5.5" ry="6" fill="#a87560"/><path d="M154 373 Q156 366 166 367 Q178 366 182 373 Z" fill="#9c1a22"/></g></g>
<g clip-path="url(#c12)"><rect x="185" y="343" width="40" height="30" fill="#060606"/><g filter="url(#vb)"><ellipse cx="203" cy="352" rx="8" ry="9" fill="#3a1a18"/><ellipse cx="199" cy="362" rx="6" ry="8" fill="#7a2a28"/><rect x="206" y="360" width="8" height="13" fill="#3a3340"/></g></g>
<g clip-path="url(#c13)"><rect x="226" y="343" width="40" height="30" fill="#b7bcc0"/><g filter="url(#vb)"><rect x="256" y="343" width="10" height="26" fill="#e3e6ea"/><ellipse cx="245" cy="356" rx="13" ry="13" fill="#2b2a2b"/><rect x="226" y="367" width="40" height="6" fill="#cfd2d2"/><rect x="226" y="343" width="10" height="18" fill="#8e9ba1"/></g></g>
<g clip-path="url(#c21)"><rect x="145" y="374" width="40" height="30" fill="#b9b9b3"/><g filter="url(#vb)"><rect x="145" y="374" width="11" height="30" fill="#8c9aa0"/><ellipse cx="163" cy="393" rx="7" ry="7" fill="#33272a"/><ellipse cx="163" cy="397" rx="5" ry="5" fill="#8a6a5e"/><rect x="150" y="399" width="35" height="6" fill="#2a2a30"/><rect x="168" y="392" width="14" height="7" fill="#8f9397"/></g></g>
<g clip-path="url(#c22)"><rect x="185" y="374" width="40" height="30" fill="#050505"/><g filter="url(#vb)"><rect x="196" y="374" width="20" height="30" fill="#b9a98f"/><ellipse cx="204.5" cy="388" rx="7" ry="5" fill="#3a2a22"/><ellipse cx="204.5" cy="393" rx="5" ry="5.5" fill="#b07e66"/><path d="M196 404 Q197 398 204.5 399 Q213 398 214 404 Z" fill="#8e1c20"/><rect x="197" y="386" width="3" height="8" fill="#b58a70"/><rect x="209.5" y="386" width="3" height="8" fill="#b58a70"/></g></g>
<g clip-path="url(#c23)"><rect x="226" y="374" width="40" height="30" fill="#9fa9ad"/><g filter="url(#vb)"><rect x="240" y="374" width="19" height="30" fill="#8d4e35"/><rect x="258" y="374" width="8" height="30" fill="#b4b4b2"/><ellipse cx="249" cy="394" rx="8" ry="8" fill="#1f1a1c"/><rect x="240" y="398" width="22" height="6" fill="#3a3638"/></g></g>
<rect x="265.8" y="342.3" width="81.2" height="60.4" fill="#4589dc"/>
<g clip-path="url(#cbig)"><rect x="268" y="344" width="78" height="57" fill="#dcdcde"/><g filter="url(#vb)"><rect x="325" y="344" width="21" height="50" fill="#e6e3ef"/><ellipse cx="310" cy="368" rx="14.5" ry="20" fill="#1c1a1b"/><path d="M275 401 Q280 388 297 384 L323 384 Q338 388 343 401 Z" fill="#1e1b1c"/><ellipse cx="310" cy="369" rx="8.5" ry="12" fill="#cfa08b"/><ellipse cx="310" cy="358.5" rx="7" ry="3" fill="#3a2c2a"/><rect x="303" y="365" width="14" height="1.2" fill="#6a4a42" opacity="0.7"/><rect x="307" y="375.5" width="6" height="1.2" fill="#a5584f"/></g></g>
<rect x="266.3" y="345.5" width="38.7" height="10.5" fill="#0c0c0c"/>
<rect x="292" y="392.5" width="48" height="8" fill="#151515" opacity="0.75"/>
<g font-family="'Liberation Sans','DejaVu Sans',sans-serif" font-weight="bold" fill="#fff">
<text x="303.5" y="353.3" font-size="6.2" text-anchor="start" direction="rtl">اسلاید قبلی</text>
<text x="337" y="399" font-size="5.6" text-anchor="start" direction="rtl">سلمان زاده فا...</text>
</g>
<!-- overlay icons on thumbs -->
<g stroke="#e8eef0" stroke-width="0.9" fill="none" opacity="0.9">
<path d="M150.3 348.8 L147.9 346.4 M149.9 346.4 H147.9 V348.4"/><path d="M152.7 348.8 L155.1 346.4 M153.1 346.4 H155.1 V348.4"/><path d="M152.7 351.2 L155.1 353.6 M153.1 353.6 H155.1 V351.6"/><path d="M150.3 351.2 L147.9 353.6 M149.9 353.6 H147.9 V351.6"/><path d="M150.3 379.8 L147.9 377.4 M149.9 377.4 H147.9 V379.4"/><path d="M152.7 379.8 L155.1 377.4 M153.1 377.4 H155.1 V379.4"/><path d="M152.7 382.2 L155.1 384.6 M153.1 384.6 H155.1 V382.6"/><path d="M150.3 382.2 L147.9 384.6 M149.9 384.6 H147.9 V382.6"/><path d="M190.8 348.8 L188.4 346.4 M190.4 346.4 H188.4 V348.4"/><path d="M193.2 348.8 L195.6 346.4 M193.6 346.4 H195.6 V348.4"/><path d="M193.2 351.2 L195.6 353.6 M193.6 353.6 H195.6 V351.6"/><path d="M190.8 351.2 L188.4 353.6 M190.4 353.6 H188.4 V351.6"/><path d="M190.8 379.8 L188.4 377.4 M190.4 377.4 H188.4 V379.4"/><path d="M193.2 379.8 L195.6 377.4 M193.6 377.4 H195.6 V379.4"/><path d="M193.2 382.2 L195.6 384.6 M193.6 384.6 H195.6 V382.6"/><path d="M190.8 382.2 L188.4 384.6 M190.4 384.6 H188.4 V382.6"/><path d="M231.3 348.8 L228.9 346.4 M230.9 346.4 H228.9 V348.4"/><path d="M233.7 348.8 L236.1 346.4 M234.1 346.4 H236.1 V348.4"/><path d="M233.7 351.2 L236.1 353.6 M234.1 353.6 H236.1 V351.6"/><path d="M231.3 351.2 L228.9 353.6 M230.9 353.6 H228.9 V351.6"/><path d="M231.3 379.8 L228.9 377.4 M230.9 377.4 H228.9 V379.4"/><path d="M233.7 379.8 L236.1 377.4 M234.1 377.4 H236.1 V379.4"/><path d="M233.7 382.2 L236.1 384.6 M234.1 384.6 H236.1 V382.6"/><path d="M231.3 382.2 L228.9 384.6 M230.9 384.6 H228.9 V382.6"/></g>
<g><circle cx="152" cy="365.5" r="3.6" fill="#e23b30"/><path d="M150.6 367.3 L153.4 363.7" stroke="#fff" stroke-width="0.9"/><rect x="151.2" y="363.5" width="1.6" height="3" rx="0.8" fill="#fff"/><circle cx="152" cy="396" r="3.6" fill="#e23b30"/><path d="M150.6 397.8 L153.4 394.2" stroke="#fff" stroke-width="0.9"/><rect x="151.2" y="394" width="1.6" height="3" rx="0.8" fill="#fff"/><circle cx="192.5" cy="365.5" r="3.6" fill="#e23b30"/><path d="M191.1 367.3 L193.9 363.7" stroke="#fff" stroke-width="0.9"/><rect x="191.7" y="363.5" width="1.6" height="3" rx="0.8" fill="#fff"/><circle cx="192.5" cy="396" r="3.6" fill="#e23b30"/><path d="M191.1 397.8 L193.9 394.2" stroke="#fff" stroke-width="0.9"/><rect x="191.7" y="394" width="1.6" height="3" rx="0.8" fill="#fff"/><circle cx="233" cy="365.5" r="3.6" fill="#e23b30"/><path d="M231.6 367.3 L234.4 363.7" stroke="#fff" stroke-width="0.9"/><rect x="232.2" y="363.5" width="1.6" height="3" rx="0.8" fill="#fff"/><circle cx="233" cy="396" r="3.6" fill="#e23b30"/><path d="M231.6 397.8 L234.4 394.2" stroke="#fff" stroke-width="0.9"/><rect x="232.2" y="394" width="1.6" height="3" rx="0.8" fill="#fff"/></g>
<g font-family="'Liberation Sans','DejaVu Sans',sans-serif" font-size="4" fill="#e8e8e8" text-anchor="start" direction="rtl"><text x="180" y="367.5">نعمتی</text><text x="216" y="368">توکلی</text><text x="262" y="367.5">آیین</text><text x="182" y="398.5">ندیمی</text><text x="214" y="399">هیراد</text><text x="262" y="399">مرادی</text></g>
</svg>

<!-- poll panel -->
<div class="a" style="left:507px;top:84px;width:10px;height:353px;background:#fcfcfc;"></div>
<div class="a" style="left:509.5px;top:88px;width:0;height:0;border-left:2px solid transparent;border-right:2px solid transparent;border-bottom:3px solid #777;"></div>
<div class="a" style="left:509.5px;top:430px;width:0;height:0;border-left:2px solid transparent;border-right:2px solid transparent;border-top:3px solid #777;"></div>
<div class="a" style="left:509px;top:176px;width:4px;height:250px;background:#8b8b8b;border-radius:2px;"></div>
<div class="a" style="left:522px;top:84px;width:138px;height:61.5px;border:1px solid #e6e9ee;border-top:none;box-sizing:border-box;"></div>
<div class="a" style="left:599px;top:88px;width:23.5px;height:13.5px;background:#a9b4c0;"></div>
<div class="a" style="left:628px;top:105.5px;width:4px;height:13.5px;background:#a9b4c0;"></div>
<div class="a" style="left:623px;top:123px;width:9px;height:13.5px;background:#a9b4c0;"></div>
<div class="t" style="right:98px;top:91px;font-size:7.4px;font-weight:bold;color:#444;">washes</div>
<div class="t" style="right:98px;top:108.5px;font-size:7.4px;font-weight:bold;color:#444;">set</div>
<div class="t" style="right:98px;top:125.5px;font-size:7.4px;font-weight:bold;color:#444;">sets</div>
<div class="t" style="left:585px;top:91.5px;font-size:7px;color:#555;">7</div>
<div class="t" style="left:589.5px;top:109px;font-size:7px;color:#555;">1</div>
<div class="t" style="left:589.5px;top:126px;font-size:7px;color:#555;">2</div>
<div class="t" style="left:531px;top:91.5px;font-size:7px;color:#555;">33%</div>
<div class="t" style="left:531px;top:109px;font-size:7px;color:#555;">5%</div>
<div class="t" style="left:531px;top:126px;font-size:7px;color:#555;">10%</div>
<div class="a" style="left:522px;top:153px;width:138.5px;height:15.5px;background:#1b6fd9;border-radius:1.5px;"></div>
<div class="t rtl" style="left:522px;width:138px;text-align:center;top:157px;font-size:7px;font-weight:bold;color:#fff;">بازگشت به گزینه‌های نظرسنجی</div>
<div class="a" style="left:519px;top:179px;width:146px;height:260px;border-top:1px solid #eceff3;"></div>
<div class="t rtl" style="right:90px;top:188px;font-size:7.2px;font-weight:bold;color:#1a1a1a;">کاربران</div>
<div class="t rtl" style="right:171px;top:188px;font-size:7.2px;font-weight:bold;color:#1a1a1a;">پاسخ</div>
<div class="row" style="top:198px">بازرس: ابانکی، مریم</div><div class="a" style="left:583px;top:207px;width:77px;height:1px;background:#f2f3f5;"></div>
<div class="row" style="top:208px">بازرس: خانم خانی، مریم</div><div class="a" style="left:583px;top:217px;width:77px;height:1px;background:#f2f3f5;"></div>
<div class="row" style="top:218px">حسینی، سما سادات</div><div class="a" style="left:583px;top:227px;width:77px;height:1px;background:#f2f3f5;"></div>
<div class="row" style="top:228px">دیهیمی، آدرتان</div><div class="a" style="left:583px;top:237px;width:77px;height:1px;background:#f2f3f5;"></div>
<div class="row" style="top:238px">سلیمی، محمد کیان</div><div class="a" style="left:583px;top:247px;width:77px;height:1px;background:#f2f3f5;"></div>
<div class="row" style="top:248px">شیشه گر، امیرحسین</div><div class="a" style="left:583px;top:257px;width:77px;height:1px;background:#f2f3f5;"></div>
<div class="row" style="top:258px">ناظمی، آراد</div><div class="a" style="left:583px;top:267px;width:77px;height:1px;background:#f2f3f5;"></div>
<div class="row" style="top:268px">گل افشان، علی</div><div class="a" style="left:583px;top:277px;width:77px;height:1px;background:#f2f3f5;"></div>
<div class="row" style="top:279px">والامنش، مهراد</div><div class="ans" style="top:279.2px">set</div><div class="a" style="left:583px;top:287px;width:77px;height:1px;background:#f2f3f5;"></div>
<div class="row" style="top:291px">محمد قاسمی، مهدی</div><div class="ans" style="top:291.2px">sets</div><div class="a" style="left:583px;top:299px;width:77px;height:1px;background:#f2f3f5;"></div>
<div class="row" style="top:302px">هاشمی، محمد طاها</div><div class="ans" style="top:302.2px">sets</div><div class="a" style="left:583px;top:310px;width:77px;height:1px;background:#f2f3f5;"></div>
<div class="row" style="top:314px">خوش نیت راد، سورنا</div><div class="ans" style="top:314.2px">wash</div><div class="a" style="left:583px;top:322px;width:77px;height:1px;background:#f2f3f5;"></div>
<div class="row" style="top:326px">نعمتی، امیر عطا</div><div class="ans" style="top:326.2px">wash</div><div class="a" style="left:583px;top:334px;width:77px;height:1px;background:#f2f3f5;"></div>
<div class="row" style="top:338px">یوسف پور کراکوئی، مهدیار</div><div class="ans" style="top:338.2px">wash</div><div class="a" style="left:583px;top:346px;width:77px;height:1px;background:#f2f3f5;"></div>
<div class="row" style="top:350px">ندیمی، سید هانی</div><div class="ans" style="top:350.2px">washes</div><div class="a" style="left:583px;top:358px;width:77px;height:1px;background:#f2f3f5;"></div>
<div class="row" style="top:362px">تقی زاده، هیراد</div><div class="ans" style="top:362.2px">washes</div><div class="a" style="left:583px;top:370px;width:77px;height:1px;background:#f2f3f5;"></div>
<div class="row" style="top:374px">توکلی، پارسا</div><div class="ans" style="top:374.2px">washes</div><div class="a" style="left:583px;top:382px;width:77px;height:1px;background:#f2f3f5;"></div>
<div class="row" style="top:386px">طاهری، آیین</div><div class="ans" style="top:386.2px">washes</div><div class="a" style="left:583px;top:394px;width:77px;height:1px;background:#f2f3f5;"></div>
<div class="row" style="top:397.5px">محقق منتظری، یزدان</div><div class="ans" style="top:397.7px">washes</div><div class="a" style="left:583px;top:405.5px;width:77px;height:1px;background:#f2f3f5;"></div>
<div class="row" style="top:409px">مرادی، بهنیا</div><div class="ans" style="top:409.2px">washes</div><div class="a" style="left:583px;top:417px;width:77px;height:1px;background:#f2f3f5;"></div>
<div class="row" style="top:421px">نوشادی راد، ایلیا</div><div class="ans" style="top:421.2px">washes</div><div class="a" style="left:583px;top:429px;width:77px;height:1px;background:#f2f3f5;"></div>

<!-- sidebar -->
<div class="a" style="left:668px;top:84px;width:1px;height:353px;background:#e3e7ec;"></div>
<div class="a" style="left:696px;top:90px;width:33px;height:13.5px;border:1px solid #d8232a;border-radius:3px;box-sizing:border-box;background:#fff;"></div>
<div class="t rtl" style="left:696px;width:33px;text-align:center;top:92px;font-size:8.5px;font-weight:bold;color:#d8232a;">علـوی</div>
<div class="a" style="left:669px;top:109.5px;width:81px;height:1px;background:#dfe3e8;"></div>
<div class="t rtl" style="right:2px;top:118.5px;font-size:5.8px;font-weight:bold;color:#444;">پیام‌ها</div>
<svg style="left:733px;top:135px" width="15" height="13" viewBox="0 0 15 13"><path d="M1 1.5 H9 Q10 1.5 10 2.5 V6 Q10 7 9 7 H4.2 L2 9 V7 H1.8 Q0.8 7 0.8 6 V2.5 Q0.8 1.5 1.8 1.5 Z" fill="none" stroke="#8a939c" stroke-width="0.8"/><path d="M11.5 4.5 H13 Q14 4.5 14 5.5 V8.5 Q14 9.5 13 9.5 V11.3 L11 9.5 H7 Q6 9.5 6 8.6" fill="none" stroke="#8a939c" stroke-width="0.8"/></svg>
<div class="t rtl" style="right:27px;top:137px;font-size:6px;color:#555;">گفت‌وگوی همـ...</div>
<div class="a" style="left:670.5px;top:137px;width:11.5px;height:7.5px;border-radius:4px;background:#e02d2d;"></div>
<div class="t" style="left:673.3px;top:138.5px;font-size:4.8px;color:#fff;font-weight:bold;">25</div>
<div class="t rtl" style="right:2px;top:157.5px;font-size:5.8px;font-weight:bold;color:#444;">یادداشت‌ها</div>
<svg style="left:734px;top:173px" width="12" height="14" viewBox="0 0 12 14"><path d="M3.5 2.5 V1.5 Q3.5 0.8 4.2 0.8 H8 L10.8 3.6 V10.5 Q10.8 11.2 10.1 11.2 H8.8" fill="none" stroke="#8a939c" stroke-width="0.8"/><path d="M1.2 3.4 Q1.2 2.6 2 2.6 H6 L8.6 5.2 V12.4 Q8.6 13.2 7.8 13.2 H2 Q1.2 13.2 1.2 12.4 Z" fill="none" stroke="#8a939c" stroke-width="0.8"/></svg>
<div class="t rtl" style="right:27px;top:177px;font-size:6px;color:#555;">یادداشت‌های همگا...</div>
<div class="t rtl" style="right:2px;top:196.5px;font-size:5.8px;font-weight:bold;color:#444;">نظرسنجی</div>
<svg style="left:734px;top:212px" width="13" height="12" viewBox="0 0 13 12"><path d="M1 1.5 H2 M3.5 1.5 H12 M1 4.5 H2 M3.5 4.5 H12 M1 7.5 H2 M3.5 7.5 H12 M1 10.5 H2 M3.5 10.5 H12" stroke="#9aa2aa" stroke-width="0.8"/></svg>
<div class="t rtl" style="right:31.5px;top:215px;font-size:6px;color:#555;">نظرسنجی</div>
<div class="t rtl" style="right:2px;top:234px;font-size:5.8px;font-weight:bold;color:#444;">کاربران (21)</div>
<svg style="left:671px;top:233px" width="8" height="8" viewBox="0 0 8 8"><circle cx="4" cy="4" r="2.8" fill="none" stroke="#555" stroke-width="1.4" stroke-dasharray="1.4 0.8"/><circle cx="4" cy="4" r="1" fill="none" stroke="#555" stroke-width="0.7"/></svg>
<div class="a" style="left:672px;top:245.5px;width:78px;height:192px;background:#f6f8fb;box-shadow:0 0 2px rgba(0,0,0,.18);"></div>
<div class="a" style="left:747px;top:246px;width:3px;height:191px;background:#eceff3;"></div><div class="a" style="left:747.5px;top:246px;width:2.5px;height:100px;background:#c2c6cb;"></div>
<div class="av" style="top:249.5px;background:#1e74d2;">تق</div><div class="bd" style="top:260px;background:#1fa37a;"></div><div class="un" style="top:250.5px">تقی زاده، هیراد</div><div class="us" style="top:259.5px"><i class="lk"></i>قفل شده | نقش‌ه...</div>
<div class="av" style="top:273.5px;background:#5b2aa8;">تو</div><div class="bd" style="top:284px;background:#1fa37a;"></div><div class="un" style="top:274.5px">توکلی، پارسا</div><div class="us" style="top:283.5px"><i class="lk"></i>قفل شده</div>
<div class="av" style="top:298.0px;background:#2a2c9c;">خو</div><div class="bd" style="top:308.5px;background:#e5483b;"></div><div class="un" style="top:299.0px">خوش نیت راد، ...</div><div class="us" style="top:308.0px">نقش‌همراه</div>
<div class="av" style="top:322.5px;background:#2576d6;">سل</div><div class="bd" style="top:333px;background:#e5483b;"></div><div class="un" style="top:323.5px">سلیمی، محمد ...</div><div class="us" style="top:332.5px">نقش‌همراه</div>
<div class="av" style="top:346.5px;background:#5a2eb0;">شی</div><div class="bd" style="top:357px;background:#e5483b;"></div><div class="un" style="top:347.5px">شیشه گر، امیر...</div><div class="us" style="top:356.5px"><i class="lk"></i>قفل شده | نقش‌ه...</div>
<div class="av" style="top:371.5px;background:#6a2ca8;">طا</div><div class="bd" style="top:382px;background:#e5483b;"></div><div class="un" style="top:376px">طاهری، آیین</div>
<div class="av" style="top:396.0px;background:#1c6fcc;">گل</div><div class="bd" style="top:406.5px;background:#e5483b;"></div><div class="un" style="top:400.5px">گل افشان، علی</div>
<div class="av" style="top:420.0px;background:#1e73d0;">مح</div><div class="bd" style="top:430.5px;background:#e5483b;"></div><div class="un" style="top:424.5px">محقق منتظری، ...</div>

<!-- windows taskbar -->
<div class="a" style="left:0;top:441px;width:4px;height:10px;background:#fff;"></div>
<div class="a" style="left:9px;top:437px;width:144px;height:19.5px;background:#f1f1f1;"></div>
<svg style="left:14px;top:441.5px" width="10" height="11" viewBox="0 0 10 11"><circle cx="5.8" cy="4.2" r="3" fill="none" stroke="#333" stroke-width="0.9"/><path d="M3.6 6.6 L0.8 9.8" stroke="#333" stroke-width="1"/></svg>
<div class="t" style="left:29px;top:443.5px;font-size:7.3px;color:#444;">Type here to search</div>
<svg style="left:116px;top:439px" width="34" height="16" viewBox="0 0 34 16"><path d="M12 1.5 Q12.8 6.8 18 7.8 Q12.8 8.8 12 14 Q11.2 8.8 6 7.8 Q11.2 6.8 12 1.5 Z" fill="#f4c522"/><path d="M24.5 6 Q25 9 28 9.5 Q25 10 24.5 13 Q24 10 21 9.5 Q24 9 24.5 6 Z" fill="#f6d04a"/><circle cx="3" cy="11.5" r="1" fill="#5aa0e8"/><circle cx="21.5" cy="3.5" r="0.9" fill="#6ab0f0"/><circle cx="30.5" cy="12.5" r="0.8" fill="#e9a5c8"/></svg>
<svg style="left:160px;top:442.5px" width="11" height="9" viewBox="0 0 11 9"><rect x="0.6" y="1.6" width="6.4" height="5.8" fill="none" stroke="#eee" stroke-width="0.9"/><path d="M9 0.6 V8.4 M9 1 H10.6 M9 8 H10.6" stroke="#eee" stroke-width="0.9"/></svg>
<svg style="left:184px;top:440.5px" width="13" height="13" viewBox="0 0 13 13"><path d="M6.5 0.8 Q10 0.8 11 3.5 Q12.5 7 10 10 Q8 12.5 5 11.8 Q1.5 11 1 7.5 Q0.6 3.5 3.5 1.6 Q5 0.8 6.5 0.8 Z" fill="#3b7ae0"/><path d="M6.5 0.8 Q10 0.8 11 3.5 Q9 6 6.5 5 Q4.5 3 6.5 0.8 Z" fill="#e85ac0"/><path d="M1 7.5 Q3 5 6 7 Q6.5 10 5 11.8 Q1.5 11 1 7.5 Z" fill="#f0a030"/><path d="M10 10 Q8 12.5 5 11.8 Q6.5 9 9 8 Z" fill="#37c0a0"/></svg>
<div class="a" style="left:210px;top:442px;width:11px;height:9px;background:#f1cf5a;"></div>
<div class="a" style="left:210px;top:442px;width:11px;height:2.5px;background:#3c9ad8;"></div>
<div class="a" style="left:210px;top:448px;width:11px;height:3px;background:#d9b23c;"></div>
<svg style="left:233.5px;top:440.5px" width="13" height="13" viewBox="0 0 13 13"><circle cx="6.5" cy="6.5" r="6" fill="#e33b2e"/><path d="M6.5 6.5 L1.3 3.5 A6 6 0 0 0 6.5 12.5 L9.4 7.5 Z" fill="#2da94f"/><path d="M6.5 6.5 L9.5 8 L6.6 12.5 A6 6 0 0 0 11.7 3.5 H6.5 Z" fill="#fbc116"/><circle cx="6.5" cy="6.5" r="2.8" fill="#fff"/><circle cx="6.5" cy="6.5" r="2.1" fill="#3f83ee"/></svg>
<svg style="left:259px;top:440px" width="13" height="14" viewBox="0 0 13 14"><circle cx="6.5" cy="7.3" r="6" fill="#ff7a1a"/><path d="M2 3.5 Q4 0.8 7.5 1.4 Q11.5 2.5 12.3 6.5 Q12.5 10 10 12" fill="none" stroke="#ffbf2e" stroke-width="1.6"/><circle cx="6.8" cy="7.6" r="3.2" fill="#7a2bd8"/><circle cx="6" cy="6.6" r="1.8" fill="#b83be0"/></svg>
<svg style="left:284px;top:440.5px" width="13" height="13" viewBox="0 0 13 13"><path d="M6.6 0.8 A5.7 5.7 0 1 1 3.6 11.4 L0.8 12.2 L1.7 9.5 A5.7 5.7 0 0 1 6.6 0.8 Z" fill="#28b446" stroke="#dff5e4" stroke-width="0.9"/><path d="M4.4 3.8 L5.4 3.6 L6 5.1 L5.4 5.8 Q6.1 7.2 7.5 7.8 L8.2 7.1 L9.6 7.8 L9.4 8.8 Q8.8 9.6 7.6 9.3 Q4.8 8.4 4 5.4 Q3.8 4.3 4.4 3.8 Z" fill="#fff"/></svg>
<div class="a" style="left:303px;top:437px;width:23.5px;height:19.5px;background:#5b6064;"></div>
<div class="a" style="left:303px;top:455px;width:23.5px;height:1.5px;background:#7fb2ea;"></div>
<svg style="left:309px;top:440.5px" width="13" height="13" viewBox="0 0 13 13"><circle cx="6.5" cy="6.5" r="6" fill="#e33b2e"/><path d="M6.5 6.5 L1.3 3.5 A6 6 0 0 0 6.5 12.5 L9.4 7.5 Z" fill="#2da94f"/><path d="M6.5 6.5 L9.5 8 L6.6 12.5 A6 6 0 0 0 11.7 3.5 H6.5 Z" fill="#fbc116"/><circle cx="6.5" cy="6.5" r="2.8" fill="#fff"/><circle cx="6.5" cy="6.5" r="2.1" fill="#3f83ee"/></svg>
<div class="a" style="left:326.5px;top:437px;width:25.5px;height:19.5px;background:#c86a1e;"></div>
<div class="a" style="left:334px;top:440.5px;width:12px;height:13px;border-radius:2px;background:#8a1d86;"></div>
<div class="t" style="left:336.3px;top:442.2px;font-size:9px;font-weight:bold;color:#fff;">G</div>
<svg style="left:546px;top:441px" width="12" height="12" viewBox="0 0 12 12"><g stroke="#4a8fe6" stroke-width="1.1" stroke-linecap="round"><path d="M6 0.8 V11.2 M1.5 3.4 L10.5 8.6 M10.5 3.4 L1.5 8.6"/><path d="M4.5 1.6 L6 3 L7.5 1.6 M4.5 10.4 L6 9 L7.5 10.4" fill="none" stroke-width="0.8"/></g></svg>
<div class="t" style="left:562px;top:443.7px;font-size:7px;color:#f2f2f2;">5 cm of snow Tue</div>
<svg style="left:629.5px;top:443.5px" width="8" height="6" viewBox="0 0 8 6"><path d="M0.8 5 L4 1.4 L7.2 5" stroke="#eee" stroke-width="0.9" fill="none"/></svg>
<svg style="left:642px;top:441px" width="7" height="11" viewBox="0 0 7 11"><rect x="2" y="0.5" width="3" height="5.6" rx="1.5" fill="#f2f2f2"/><path d="M0.8 4.8 Q0.8 7.6 3.5 7.6 Q6.2 7.6 6.2 4.8 M3.5 7.6 V10 M1.8 10.2 H5.2" stroke="#f2f2f2" stroke-width="0.8" fill="none"/></svg>
<div class="a" style="left:655px;top:443.5px;width:8.5px;height:6px;background:#f2f2f2;border-radius:.5px;"></div>
<svg style="left:667px;top:442.5px" width="9" height="9" viewBox="0 0 9 9"><path d="M0.8 5.4 L2.6 3.4 H4 L6.2 1 V8 L4 5.8" fill="none" stroke="#c9c9c9" stroke-width="0.8"/><path d="M6.6 2.4 L8.4 6.6 M8.4 2.4 L6.6 6.6" stroke="#c9c9c9" stroke-width="0.6"/></svg>
<div class="t" style="left:679px;top:444px;font-size:6.2px;color:#f2f2f2;">ENG</div>
<div class="t" style="left:699px;top:439.5px;font-size:6px;color:#f2f2f2;">12:15 PM</div>
<div class="t" style="left:696.5px;top:448.7px;font-size:6px;color:#f2f2f2;">12/28/2025</div>
<svg style="left:732px;top:441.5px" width="11" height="11" viewBox="0 0 11 11"><path d="M1 1 H10 V8 H6 L3.6 10.2 V8 H1 Z" fill="none" stroke="#f2f2f2" stroke-width="0.9"/></svg>
<!-- windows activation watermark -->
<div class="t" style="left:607px;top:396.5px;font-size:9.9px;color:rgba(120,125,130,.45);">Activate Windows</div>
<div class="t" style="left:607px;top:409px;font-size:6.8px;color:rgba(120,125,130,.42);">Go to Settings to activate Windows.</div>
</body>
</html>
